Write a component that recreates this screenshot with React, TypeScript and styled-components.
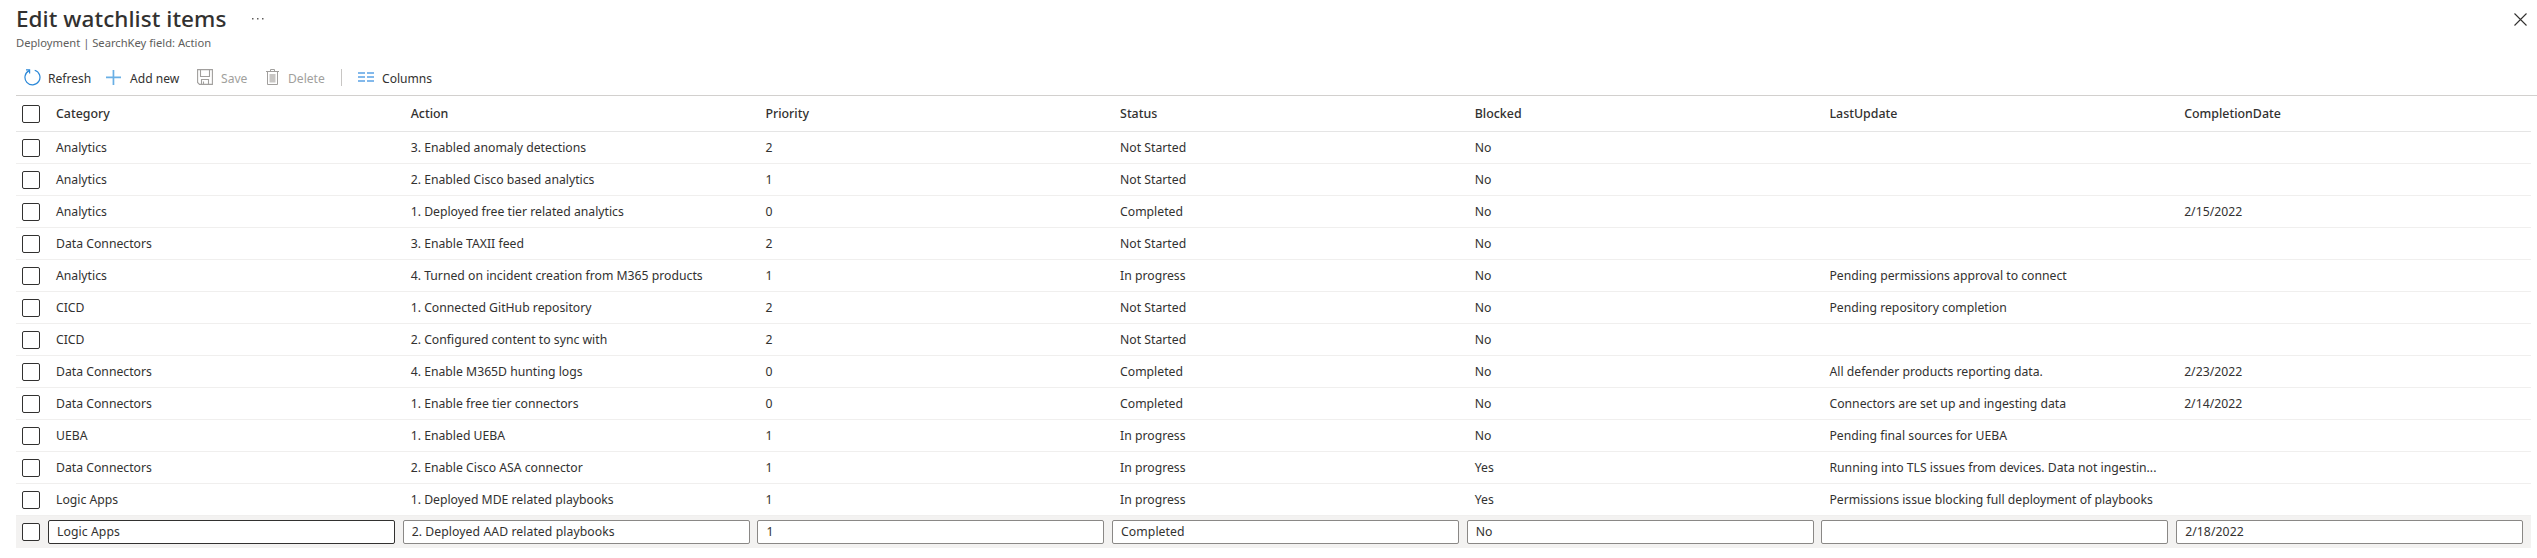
import React from 'react';
import styled, { createGlobalStyle, css } from 'styled-components';

const GlobalStyle = createGlobalStyle`
  * { box-sizing: border-box; }
  body {
    margin: 0;
    background: #fff;
    color: #323130;
    font-family: 'Noto Sans', 'Open Sans', sans-serif;
    font-size: 12.23px;
  }
`;

const Blade = styled.main`
  display: flex;
  flex-direction: column;
  height: 558px;
  padding-left: 16px;
  overflow: hidden;
`;

const BladeHeader = styled.header`
  display: flex;
  justify-content: space-between;
  align-items: flex-start;
  height: 52px;
  padding: 4px 10px 0 0;
`;

const TitleRow = styled.div`
  display: flex;
  align-items: center;
  height: 29px;
`;

const Title = styled.h1`
  margin: 0;
  font-size: 22.5px;
  font-weight: 500;
  letter-spacing: 0.06px;
  line-height: 29px;
  white-space: nowrap;
`;

const Subtitle = styled.div`
  height: 20px;
  color: #605e5c;
  font-size: 11.2px;
  line-height: 20px;
`;

const IconButton = styled.button<{ $offset?: number }>`
  display: flex;
  margin: 0 0 0 ${(p) => p.$offset ?? 0}px;
  padding: 0;
  border: 0;
  background: none;
`;

const CloseButton = styled(IconButton)`
  margin-top: 9px;
`;

const Toolbar = styled.div`
  display: flex;
  align-items: center;
  height: 44px;
  padding: 7px 0 0 8px;
  border-bottom: 1px solid #d2d0ce;
`;

const Command = styled.button<{ $width: number; $gap: number }>`
  display: flex;
  align-items: center;
  gap: ${(p) => p.$gap}px;
  width: ${(p) => p.$width}px;
  padding: 0;
  border: 0;
  background: none;
  color: #323130;
  font: inherit;
  font-size: 12.1px;
  line-height: 18px;
  white-space: nowrap;

  &:disabled { color: #a19f9d; }
  svg { flex: none; }
`;

const Label = styled.span`
  padding-top: 3px;
`;

const Separator = styled.span`
  width: 1px;
  height: 17px;
  margin-right: 16px;
  background: #c8c6c4;
`;

const Grid = styled.div`
  width: 2515px;
`;

const rowLayout = css`
  display: grid;
  grid-template-columns: 32px repeat(7, 354.7px);
  align-items: center;
`;

const HeadRow = styled.div`
  ${rowLayout}
  height: 36px;
  border-bottom: 1px solid #e5e5e5;
  font-size: 12.4px;
  font-weight: 500;
`;

const Row = styled.div`
  ${rowLayout}
  height: 32px;
  border-bottom: 1px solid #f0efee;
`;

const EditRow = styled.div`
  ${rowLayout}
  height: 32px;
  background: #f3f2f1;
`;

const Cell = styled.div`
  width: 343px;
  padding-left: 8px;
  overflow: hidden;
  line-height: 20px;
  text-overflow: ellipsis;
  white-space: nowrap;
`;

const Checkbox = styled.span`
  width: 18px;
  height: 18px;
  margin-left: 6px;
  border: 1px solid #323130;
  border-radius: 2px;
  background: #fff;
`;

const Field = styled.input<{ $focused?: boolean }>`
  width: 347px;
  height: 24px;
  padding: 0 8px 1px;
  border: 1px solid ${(p) => (p.$focused ? '#323130' : '#8a8886')};
  border-radius: 2px;
  outline: none;
  background: #fff;
  color: #323130;
  font: inherit;
  letter-spacing: 0.07px;
`;

const RefreshIcon = () => (
  <svg width="17" height="17" viewBox="0 0 17 17" fill="none" stroke="#2b88d8" strokeWidth="1.2">
    <path d="M10.7 1.2A7.5 7.5 0 1 1 5.2 1.6" />
    <path d="M2 .8H5.6V4.4" />
  </svg>
);

const PlusIcon = () => (
  <svg width="15" height="15" viewBox="0 0 15 15" fill="#69afe5">
    <path d="M6.6 0h1.7v6.6H15v1.7H8.3V15H6.6V8.3H0V6.6h6.6z" />
  </svg>
);

const SaveIcon = () => (
  <svg width="16" height="16" viewBox="0 0 16 16" fill="none" stroke="#a19f9d" strokeWidth="1.1">
    <path d="M.6 .6H15.4V15.4H2.5L.6 13.5Z" />
    <path d="M3.5 .6V7.5H12.5V.6M4.5 15.4V10.5H11.5V15.4M6.5 12.5V15.4" />
  </svg>
);

const DeleteIcon = () => (
  <svg width="13" height="16" viewBox="0 0 13 16" fill="none" stroke="#a19f9d" strokeWidth="1">
    <path d="M0 2.5H13M4.5 2.5V.5H8.5V2.5M1.5 2.5V15.5H11.5V2.5" />
    <path d="M3.5 5H9.5V13.5H3.5Z" fill="#c8c6c4" stroke="none" />
  </svg>
);

const ColumnsIcon = () => (
  <svg width="16" height="12" viewBox="0 0 16 12" fill="#83b9eb">
    <path d="M0 1h7v2H0zM9 1h7v2H9zM0 5h7v2H0zM9 5h7v2H9zM0 9h7v2H0zM9 9h7v2H9z" />
  </svg>
);

const MoreIcon = () => (
  <svg width="12" height="2" viewBox="0 0 12 2" fill="#605e5c">
    <rect x="0" width="1.5" height="1.5" />
    <rect x="5" width="1.5" height="1.5" />
    <rect x="10" width="1.5" height="1.5" />
  </svg>
);

const CloseIcon = () => (
  <svg width="13" height="13" viewBox="0 0 13 13" stroke="#323130" strokeWidth="1.1">
    <path d="M.5 .5L12.5 12.5M12.5 .5L.5 12.5" />
  </svg>
);

const columns = ['Category', 'Action', 'Priority', 'Status', 'Blocked', 'LastUpdate', 'CompletionDate'];

const items = [
  ['Analytics', '3. Enabled anomaly detections', '2', 'Not Started', 'No', '', ''],
  ['Analytics', '2. Enabled Cisco based analytics', '1', 'Not Started', 'No', '', ''],
  ['Analytics', '1. Deployed free tier related analytics', '0', 'Completed', 'No', '', '2/15/2022'],
  ['Data Connectors', '3. Enable TAXII feed', '2', 'Not Started', 'No', '', ''],
  ['Analytics', '4. Turned on incident creation from M365 products', '1', 'In progress', 'No', 'Pending permissions approval to connect', ''],
  ['CICD', '1. Connected GitHub repository', '2', 'Not Started', 'No', 'Pending repository completion', ''],
  ['CICD', '2. Configured content to sync with', '2', 'Not Started', 'No', '', ''],
  ['Data Connectors', '4. Enable M365D hunting logs', '0', 'Completed', 'No', 'All defender products reporting data.', '2/23/2022'],
  ['Data Connectors', '1. Enable free tier connectors', '0', 'Completed', 'No', 'Connectors are set up and ingesting data', '2/14/2022'],
  ['UEBA', '1. Enabled UEBA', '1', 'In progress', 'No', 'Pending final sources for UEBA', ''],
  ['Data Connectors', '2. Enable Cisco ASA connector', '1', 'In progress', 'Yes', 'Running into TLS issues from devices. Data not ingestin...', ''],
  ['Logic Apps', '1. Deployed MDE related playbooks', '1', 'In progress', 'Yes', 'Permissions issue blocking full deployment of playbooks', ''],
];

const editing = ['Logic Apps', '2. Deployed AAD related playbooks', '1', 'Completed', 'No', '', '2/18/2022'];

export default function App() {
  return (
    <>
      <GlobalStyle />
      <Blade>
        <BladeHeader>
          <div>
            <TitleRow>
              <Title>Edit watchlist items</Title>
              <IconButton $offset={26} aria-label="More"><MoreIcon /></IconButton>
            </TitleRow>
            <Subtitle>Deployment | SearchKey field: Action</Subtitle>
          </div>
          <CloseButton aria-label="Close"><CloseIcon /></CloseButton>
        </BladeHeader>
        <Toolbar>
          <Command $width={82} $gap={7}><RefreshIcon /><Label>Refresh</Label></Command>
          <Command $width={91} $gap={9}><PlusIcon /><Label>Add new</Label></Command>
          <Command $width={69} $gap={8} disabled><SaveIcon /><Label>Save</Label></Command>
          <Command $width={75} $gap={9} disabled><DeleteIcon /><Label>Delete</Label></Command>
          <Separator />
          <Command $width={80} $gap={8}><ColumnsIcon /><Label>Columns</Label></Command>
        </Toolbar>
        <Grid>
          <HeadRow>
            <Checkbox />
            {columns.map((c) => <Cell key={c}>{c}</Cell>)}
          </HeadRow>
          {items.map((item, i) => (
            <Row key={i}>
              <Checkbox />
              {item.map((v, j) => <Cell key={j}>{v}</Cell>)}
            </Row>
          ))}
          <EditRow>
            <Checkbox />
            {editing.map((v, j) => <Field key={j} $focused={j === 0} defaultValue={v} />)}
          </EditRow>
        </Grid>
      </Blade>
    </>
  );
}
